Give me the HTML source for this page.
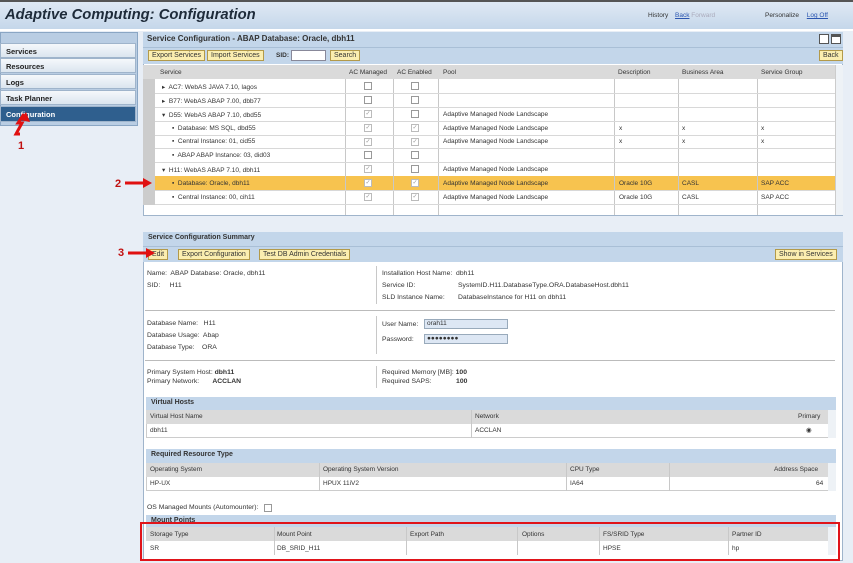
<!DOCTYPE html>
<html><head><meta charset="utf-8"><style>
*{box-sizing:border-box;margin:0;padding:0}
body{width:853px;height:563px;overflow:hidden;background:#e8eef6;font-family:"Liberation Sans",Arial,sans-serif;font-size:7px;color:#333;position:relative}
.a{position:absolute}
.hdr{left:0;top:0;width:853px;height:31px;background:linear-gradient(#dfe9f4,#c5d7ea);border-top:2px solid #555;border-bottom:2px solid #fff}
.title{left:5px;top:7px;font-size:14.8px;font-weight:bold;font-style:italic;color:#1e2b3a}
.nav{left:0;width:136px;height:15px;background:linear-gradient(#f5f8fb,#dbe5ef);border:1px solid #9fb4cb;font-weight:bold;font-size:7.5px;padding:3px 5px;color:#222}
.btn{background:#fbeeb0;border:1px solid #b39a4a;font-size:7px;padding:1px 3px;height:11px;line-height:8px;color:#333}
.bar{background:#c3d6ea}
.cell{position:absolute;font-size:6.5px;white-space:nowrap}
.cb{position:absolute;width:8px;height:8px;border:1px solid #999;background:#fff}
.ck{border-color:#bbb;color:#999;font-size:6px;line-height:6px;text-align:center}
.vl{position:absolute;width:1px;background:#c8c8c8}
.hl{position:absolute;height:1px;background:#d8d8d8}
.lbl{position:absolute;font-size:6.8px;white-space:nowrap}
.sh{position:absolute;background:#c3d6ea;font-weight:bold;font-size:7px;padding:2px 5px}
.ch{position:absolute;background:#dadada;height:14px}
</style></head><body>
<div class="a hdr"></div>
<div class="a title">Adaptive Computing: Configuration</div>
<div class="a" style="left:648px;top:12px;font-size:6.5px">History <span style="color:#2a55b0;text-decoration:underline;margin-left:5px">Back</span> <span style="color:#aab">Forward</span></div>
<div class="a" style="left:765px;top:12px;font-size:6.5px">Personalize <span style="color:#2a55b0;text-decoration:underline;margin-left:6px">Log Off</span></div>
<div class="a" style="left:0;top:32px;width:138px;height:94px;background:#b9cde3;border:1px solid #8aa6c4"></div>
<div class="a nav" style="top:43px">Services</div>
<div class="a nav" style="top:58px">Resources</div>
<div class="a nav" style="top:74px">Logs</div>
<div class="a nav" style="top:90px">Task Planner</div>
<div class="a nav" style="top:106px;background:#2f5f8e;color:#fff;height:16px">Configuration</div>
<svg class="a" style="left:8px;top:112px" width="30" height="40"><path d="M16 2 L10 11 L14 11 L8 22 L12 22" stroke="#e01010" stroke-width="3" fill="none"/><polygon points="18,0 22,10 12,8" fill="#e01010"/><text x="10" y="37" fill="#c01010" font-size="11" font-weight="bold" font-family="Liberation Sans">1</text></svg>

<div class="a" style="left:143px;top:32px;width:700px;height:184px;background:#fff;border:1px solid #9fb4cb"></div>
<div class="a bar" style="left:143px;top:32px;width:700px;height:15px;font-size:8px;font-weight:bold;color:#333;padding:2px 4px">Service Configuration - ABAP Database: Oracle, dbh11</div>
<div class="a" style="left:819px;top:34px;width:10px;height:10px;border:1px solid #555;background:#fff"></div>
<div class="a" style="left:831px;top:34px;width:10px;height:10px;border:1px solid #555;background:#fff;border-top:3px solid #555"></div>
<div class="a bar" style="left:143px;top:47px;width:700px;height:17px;border-top:1px solid #a9bfd6"></div>
<div class="a btn" style="left:148px;top:50px">Export Services</div>
<div class="a btn" style="left:207px;top:50px">Import Services</div>
<div class="a" style="left:276px;top:52px;font-size:6.5px;font-weight:bold">SID:</div>
<div class="a" style="left:291px;top:50px;width:35px;height:11px;background:#fff;border:1px solid #889"></div>
<div class="a btn" style="left:330px;top:50px">Search</div>
<div class="a btn" style="left:819px;top:50px">Back</div>

<div class="ch" style="left:143px;top:65px;width:692px"></div>
<div class="a" style="left:143px;top:79px;width:12px;height:126px;background:#ccc"></div>
<div class="cell" style="left:160px;top:69px">Service</div>
<div class="cell" style="left:349px;top:69px">AC Managed</div>
<div class="cell" style="left:397px;top:69px">AC Enabled</div>
<div class="cell" style="left:443px;top:69px">Pool</div>
<div class="cell" style="left:618px;top:69px">Description</div>
<div class="cell" style="left:682px;top:69px">Business Area</div>
<div class="cell" style="left:761px;top:69px">Service Group</div>
<div class="a" style="left:155px;top:176px;width:680px;height:14px;background:#f7c34f"></div>
<div class="vl" style="left:345px;top:79px;height:136px"></div>
<div class="vl" style="left:393px;top:79px;height:136px"></div>
<div class="vl" style="left:438px;top:79px;height:136px"></div>
<div class="vl" style="left:614px;top:79px;height:136px"></div>
<div class="vl" style="left:678px;top:79px;height:136px"></div>
<div class="vl" style="left:757px;top:79px;height:136px"></div>
<div class="a" style="left:835px;top:65px;width:8px;height:150px;background:#eef2f6;border-left:1px solid #ccc"></div>

<div class="hl" style="left:155px;top:93px;width:680px"></div>
<div class="hl" style="left:155px;top:107px;width:680px"></div>
<div class="hl" style="left:155px;top:121px;width:680px"></div>
<div class="hl" style="left:155px;top:135px;width:680px"></div>
<div class="hl" style="left:155px;top:148px;width:680px"></div>
<div class="hl" style="left:155px;top:162px;width:680px"></div>
<div class="hl" style="left:155px;top:190px;width:680px"></div>
<div class="hl" style="left:155px;top:204px;width:680px"></div>

<div class="cell" style="left:162px;top:83px">▸&nbsp; AC7: WebAS JAVA 7.10, lagos</div>
<div class="cell" style="left:162px;top:97px">▸&nbsp; B77: WebAS ABAP 7.00, dbb77</div>
<div class="cell" style="left:162px;top:111px">▾&nbsp; D55: WebAS ABAP 7.10, dbd55</div>
<div class="cell" style="left:172px;top:125px">▪&nbsp; Database: MS SQL, dbd55</div>
<div class="cell" style="left:172px;top:138px">▪&nbsp; Central Instance: 01, cid55</div>
<div class="cell" style="left:172px;top:152px">▪&nbsp; ABAP ABAP Instance: 03, did03</div>
<div class="cell" style="left:162px;top:166px">▾&nbsp; H11: WebAS ABAP 7.10, dbh11</div>
<div class="cell" style="left:172px;top:180px">▪&nbsp; Database: Oracle, dbh11</div>
<div class="cell" style="left:172px;top:194px">▪&nbsp; Central Instance: 00, cih11</div>

<div class="cb" style="left:364px;top:82px"></div><div class="cb" style="left:411px;top:82px"></div>
<div class="cb" style="left:364px;top:96px"></div><div class="cb" style="left:411px;top:96px"></div>
<div class="cb ck" style="left:364px;top:110px">✓</div><div class="cb" style="left:411px;top:110px"></div>
<div class="cb ck" style="left:364px;top:124px">✓</div><div class="cb ck" style="left:411px;top:124px">✓</div>
<div class="cb ck" style="left:364px;top:138px">✓</div><div class="cb ck" style="left:411px;top:138px">✓</div>
<div class="cb" style="left:364px;top:151px"></div><div class="cb" style="left:411px;top:151px"></div>
<div class="cb ck" style="left:364px;top:165px">✓</div><div class="cb" style="left:411px;top:165px"></div>
<div class="cb ck" style="left:364px;top:179px">✓</div><div class="cb ck" style="left:411px;top:179px">✓</div>
<div class="cb ck" style="left:364px;top:193px">✓</div><div class="cb ck" style="left:411px;top:193px">✓</div>

<div class="cell" style="left:443px;top:111px">Adaptive Managed Node Landscape</div>
<div class="cell" style="left:443px;top:125px">Adaptive Managed Node Landscape</div>
<div class="cell" style="left:443px;top:138px">Adaptive Managed Node Landscape</div>
<div class="cell" style="left:443px;top:166px">Adaptive Managed Node Landscape</div>
<div class="cell" style="left:443px;top:180px">Adaptive Managed Node Landscape</div>
<div class="cell" style="left:443px;top:194px">Adaptive Managed Node Landscape</div>
<div class="cell" style="left:619px;top:125px">x</div><div class="cell" style="left:682px;top:125px">x</div><div class="cell" style="left:761px;top:125px">x</div>
<div class="cell" style="left:619px;top:138px">x</div><div class="cell" style="left:682px;top:138px">x</div><div class="cell" style="left:761px;top:138px">x</div>
<div class="cell" style="left:619px;top:180px">Oracle 10G</div><div class="cell" style="left:682px;top:180px">CASL</div><div class="cell" style="left:761px;top:180px">SAP ACC</div>
<div class="cell" style="left:619px;top:194px">Oracle 10G</div><div class="cell" style="left:682px;top:194px">CASL</div><div class="cell" style="left:761px;top:194px">SAP ACC</div>
<svg class="a" style="left:115px;top:175px" width="40" height="16"><text x="0" y="12" fill="#c01010" font-size="11" font-weight="bold" font-family="Liberation Sans">2</text><path d="M10 8 H30" stroke="#e01010" stroke-width="3"/><polygon points="28,3 37,8 28,13" fill="#e01010"/></svg>

<div class="a" style="left:143px;top:232px;width:700px;height:329px;background:#fff;border:1px solid #9fb4cb"></div>
<div class="a bar" style="left:143px;top:232px;width:700px;height:14px;font-size:7px;font-weight:bold;padding:2px 5px">Service Configuration Summary</div>
<div class="a bar" style="left:143px;top:246px;width:700px;height:16px;border-top:1px solid #a9bfd6"></div>
<div class="a btn" style="left:148px;top:249px">Edit</div>
<div class="a btn" style="left:178px;top:249px">Export Configuration</div>
<div class="a btn" style="left:259px;top:249px">Test DB Admin Credentials</div>
<div class="a btn" style="left:775px;top:249px">Show in Services</div>
<svg class="a" style="left:118px;top:245px" width="40" height="16"><text x="0" y="11" fill="#c01010" font-size="11" font-weight="bold" font-family="Liberation Sans">3</text><path d="M10 8 H30" stroke="#e01010" stroke-width="3"/><polygon points="28,3 37,8 28,13" fill="#e01010"/></svg>

<div class="lbl" style="left:147px;top:270px">Name:&nbsp; ABAP Database: Oracle, dbh11</div>
<div class="lbl" style="left:147px;top:282px">SID:&nbsp;&nbsp;&nbsp;&nbsp; H11</div>
<div class="vl" style="left:376px;top:266px;height:38px"></div>
<div class="lbl" style="left:382px;top:270px">Installation Host Name:&nbsp; dbh11</div>
<div class="lbl" style="left:382px;top:282px">Service ID:</div><div class="lbl" style="left:458px;top:282px">SystemID.H11.DatabaseType.ORA.DatabaseHost.dbh11</div>
<div class="lbl" style="left:382px;top:294px">SLD Instance Name:</div><div class="lbl" style="left:458px;top:294px">DatabaseInstance for H11 on dbh11</div>
<div class="hl" style="left:145px;top:310px;width:690px;background:#bbb"></div>
<div class="lbl" style="left:147px;top:320px">Database Name:&nbsp;&nbsp; H11</div>
<div class="lbl" style="left:147px;top:332px">Database Usage:&nbsp; Abap</div>
<div class="lbl" style="left:147px;top:344px">Database Type:&nbsp;&nbsp;&nbsp; ORA</div>
<div class="vl" style="left:376px;top:316px;height:38px"></div>
<div class="lbl" style="left:382px;top:321px">User Name:</div>
<div class="a" style="left:424px;top:319px;width:84px;height:10px;background:#dde7f4;border:1px solid #9ab;font-size:6.5px;padding-left:2px">orah11</div>
<div class="lbl" style="left:382px;top:336px">Password:</div>
<div class="a" style="left:424px;top:334px;width:84px;height:10px;background:#dde7f4;border:1px solid #9ab;font-size:6.5px;padding-left:2px;font-weight:bold">●●●●●●●●</div>
<div class="hl" style="left:145px;top:360px;width:690px;background:#bbb"></div>
<div class="lbl" style="left:147px;top:369px">Primary System Host: <b>dbh11</b></div>
<div class="lbl" style="left:147px;top:378px">Primary Network:&nbsp;&nbsp;&nbsp;&nbsp;&nbsp;&nbsp; <b>ACCLAN</b></div>
<div class="vl" style="left:376px;top:366px;height:22px"></div>
<div class="lbl" style="left:382px;top:369px">Required Memory [MB]: <b>100</b></div>
<div class="lbl" style="left:382px;top:378px">Required SAPS:&nbsp;&nbsp;&nbsp;&nbsp;&nbsp;&nbsp;&nbsp;&nbsp;&nbsp;&nbsp;&nbsp;&nbsp; <b>100</b></div>

<div class="a" style="left:146px;top:397px;width:690px;height:41px;border:1px solid #ccc"></div>
<div class="sh" style="left:146px;top:397px;width:690px;height:13px">Virtual Hosts</div>
<div class="ch" style="left:146px;top:410px;width:682px"></div>
<div class="cell" style="left:150px;top:413px">Virtual Host Name</div>
<div class="cell" style="left:475px;top:413px">Network</div>
<div class="cell" style="left:798px;top:413px">Primary</div>
<div class="vl" style="left:471px;top:410px;height:28px"></div>
<div class="cell" style="left:150px;top:427px">dbh11</div><div class="cell" style="left:475px;top:427px">ACCLAN</div><div class="cell" style="left:806px;top:426px">◉</div>
<div class="a" style="left:828px;top:410px;width:8px;height:28px;background:#eef2f6"></div>

<div class="a" style="left:146px;top:449px;width:690px;height:42px;border:1px solid #ccc"></div>
<div class="sh" style="left:146px;top:449px;width:690px;height:14px">Required Resource Type</div>
<div class="ch" style="left:146px;top:463px;width:682px"></div>
<div class="cell" style="left:150px;top:466px">Operating System</div>
<div class="cell" style="left:323px;top:466px">Operating System Version</div>
<div class="cell" style="left:570px;top:466px">CPU Type</div>
<div class="cell" style="left:774px;top:466px">Address Space</div>
<div class="vl" style="left:319px;top:463px;height:28px"></div><div class="vl" style="left:566px;top:463px;height:28px"></div><div class="vl" style="left:669px;top:463px;height:28px"></div>
<div class="cell" style="left:150px;top:480px">HP-UX</div><div class="cell" style="left:323px;top:480px">HPUX 11iV2</div><div class="cell" style="left:570px;top:480px">IA64</div><div class="cell" style="left:816px;top:480px">64</div>
<div class="a" style="left:828px;top:463px;width:8px;height:28px;background:#eef2f6"></div>

<div class="lbl" style="left:147px;top:504px">OS Managed Mounts (Automounter):</div>
<div class="cb" style="left:264px;top:504px"></div>
<div class="sh" style="left:146px;top:515px;width:690px;height:12px">Mount Points</div>
<div class="ch" style="left:146px;top:527px;width:682px"></div>
<div class="cell" style="left:150px;top:531px">Storage Type</div>
<div class="cell" style="left:277px;top:531px">Mount Point</div>
<div class="cell" style="left:410px;top:531px">Export Path</div>
<div class="cell" style="left:522px;top:531px">Options</div>
<div class="cell" style="left:603px;top:531px">FS/SRID Type</div>
<div class="cell" style="left:732px;top:531px">Partner ID</div>
<div class="vl" style="left:274px;top:527px;height:28px"></div><div class="vl" style="left:406px;top:527px;height:28px"></div><div class="vl" style="left:517px;top:527px;height:28px"></div><div class="vl" style="left:599px;top:527px;height:28px"></div><div class="vl" style="left:728px;top:527px;height:28px"></div>
<div class="cell" style="left:150px;top:545px">SR</div><div class="cell" style="left:277px;top:545px">DB_SRID_H11</div><div class="cell" style="left:603px;top:545px">HPSE</div><div class="cell" style="left:732px;top:545px">hp</div>
<div class="a" style="left:828px;top:527px;width:8px;height:28px;background:#eef2f6"></div>
<div class="a" style="left:140px;top:522px;width:700px;height:39px;border:2px solid #e0141a"></div>
</body></html>
